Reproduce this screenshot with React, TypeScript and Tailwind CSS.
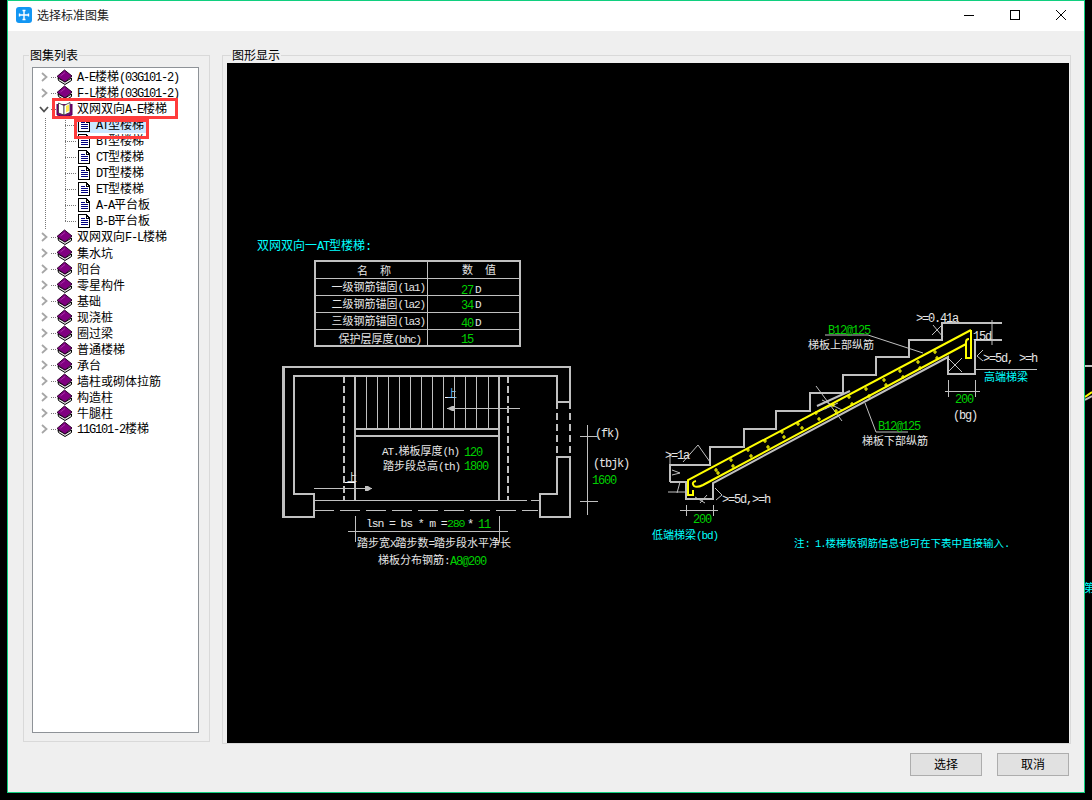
type Node = { label: string; open?: boolean; children?: string[] };

const tree: Node[] = [
  { label: 'A-E楼梯(03G101-2)' },
  { label: 'F-L楼梯(03G101-2)' },
  {
    label: '双网双向A-E楼梯',
    open: true,
    children: ['AT型楼梯', 'BT型楼梯', 'CT型楼梯', 'DT型楼梯', 'ET型楼梯', 'A-A平台板', 'B-B平台板'],
  },
  { label: '双网双向F-L楼梯' },
  { label: '集水坑' },
  { label: '阳台' },
  { label: '零星构件' },
  { label: '基础' },
  { label: '现浇桩' },
  { label: '圈过梁' },
  { label: '普通楼梯' },
  { label: '承台' },
  { label: '墙柱或砌体拉筋' },
  { label: '构造柱' },
  { label: '牛腿柱' },
  { label: '11G101-2楼梯' },
];

const MONO = '"Liberation Mono", monospace';
const CJK = '"Noto Sans CJK SC", sans-serif';

// latin runs are 6px wide in the original bitmap font, so split them off from the CJK runs
function splitRuns(text: string) {
  return text.match(/[\x00-\x7f]+|[^\x00-\x7f]+/g) ?? [];
}

function Mixed({ text }: { text: string }) {
  return (
    <>
      {splitRuns(text).map((run, i) =>
        /^[\x00-\x7f]/.test(run) ? (
          <span key={i} className="font-['Liberation_Mono',monospace] text-xs tracking-[-1.2px]">
            {run}
          </span>
        ) : (
          <span key={i}>{run}</span>
        ),
      )}
    </>
  );
}

function Chevron({ open }: { open?: boolean }) {
  return open ? (
    <svg width="10" height="7" viewBox="0 0 10 7" fill="none" stroke="#505050" strokeWidth="1.8">
      <path d="M1 1 L5 5.5 L9 1" />
    </svg>
  ) : (
    <svg width="7" height="10" viewBox="0 0 7 10" fill="none" stroke="#a6a6a6" strokeWidth="1.8">
      <path d="M1 1 L5.5 5 L1 9" />
    </svg>
  );
}

function BookIcon() {
  return (
    <svg width="17" height="16" viewBox="0 0 17 16" className="shrink-0">
      <path d="M2 9 L2.5 11.5 L9 15.5 L15.5 11.5 L15.5 9 L9 13 Z" fill="#e8e8e8" stroke="#000" strokeWidth="1" />
      <path d="M1 7.5 L8.5 1 L16 7 L9 13 Z" fill="#800080" stroke="#2a002a" strokeWidth="1" />
      <path d="M4.5 7 L9 3.5" stroke="#a830a8" strokeWidth="1" />
    </svg>
  );
}

function OpenBookIcon() {
  return (
    <svg width="17" height="16" viewBox="0 0 17 16" className="shrink-0">
      <path d="M1 3 V14 L8 15.5 L16 14 V3" fill="#800080" stroke="#500050" strokeWidth="1" />
      <path d="M2.5 2 L8 4.5 V14 L2.5 12 Z" fill="#fff" stroke="#333" strokeWidth="0.8" />
      <path d="M14 1.5 L8 4.5 V14 L14 11.5 Z" fill="#fff" stroke="#333" strokeWidth="0.8" />
      <path d="M10 5 L13 3.5 V10 L10 11.5 Z" fill="#ffe94a" />
    </svg>
  );
}

function DocIcon() {
  return (
    <svg width="12" height="14" viewBox="0 0 12 14" className="shrink-0" shapeRendering="crispEdges">
      <path d="M0.5 0.5 H8 L11.5 4 V13.5 H0.5 Z" fill="#fff" stroke="#000" strokeWidth="1" />
      <path d="M8 0.5 V4 H11.5" fill="none" stroke="#000" strokeWidth="1" />
      <path d="M2.5 4.5 H7 M2.5 6.5 H9.5 M2.5 8.5 H9.5 M2.5 10.5 H9.5" stroke="#000080" strokeWidth="1" />
    </svg>
  );
}

function TreeRows() {
  return (
    <>
      {tree.map((node) => (
        <div key={node.label}>
          <div className="flex h-4 items-center">
            <span className="ml-[5px] flex w-[12px] justify-center">
              <Chevron open={node.open} />
            </span>
            <span className="ml-[6px]">{node.open ? <OpenBookIcon /> : <BookIcon />}</span>
            <span className="ml-[4px] whitespace-nowrap leading-4">
              <Mixed text={node.label} />
            </span>
          </div>
          {node.children?.map((child, i) => (
            <div key={child} className="flex h-4 pl-[41px]">
              <div className={`flex items-center pl-[4px] pr-[2px] ${i === 0 ? 'bg-[#cce8ff]' : ''}`}>
                <DocIcon />
                <span className="ml-[6px] whitespace-nowrap leading-4">
                  <Mixed text={child} />
                </span>
              </div>
            </div>
          ))}
        </div>
      ))}
    </>
  );
}

// Text on the CAD canvas, x/y in page pixels, y is the vertical centre
function T({
  x,
  y,
  s = 11,
  fill = '#e6e6e6',
  anchor = 'start',
  children,
}: {
  x: number;
  y: number;
  s?: number;
  fill?: string;
  anchor?: 'start' | 'middle' | 'end';
  children: string;
}) {
  return (
    <text x={x} y={y + s * 0.38} fill={fill} textAnchor={anchor}>
      {splitRuns(children).map((run, i) =>
        /^[\x00-\x7f]/.test(run) ? (
          <tspan key={i} fontFamily={MONO} fontSize={s} letterSpacing={-s * 0.1} xmlSpace="preserve">
            {run}
          </tspan>
        ) : (
          <tspan key={i} fontFamily={CJK} fontSize={s}>
            {run}
          </tspan>
        ),
      )}
    </text>
  );
}

const rebarTies = [
  [716, 470], [718, 473], [731, 460], [733, 466], [748, 450], [751, 456], [765, 441], [768, 447],
  [782, 432], [784, 437], [798, 424], [802, 428], [816, 413], [819, 419], [833, 405], [836, 411],
  [849, 397], [852, 404], [866, 389], [869, 396], [884, 380], [886, 385], [900, 371], [903, 377],
  [918, 362], [920, 368], [935, 352], [937, 358],
];

const treads = [366, 377, 388, 399, 410, 421, 432, 443, 454, 465, 476, 488];

const GREY = '#c0c0c0';
const GREEN = '#00d000';
const CYAN = '#00ffff';

function Drawing() {
  return (
    <svg viewBox="227 63 842 680" className="block h-[680px] w-[842px] bg-black">
      <T x={257} y={245} s={12} fill={CYAN}>双网双向一AT型楼梯:</T>

      {/* table */}
      <g fill="none" stroke={GREY} shapeRendering="crispEdges">
        <rect x={315} y={261} width={205} height={85} strokeWidth={2} />
        <path d="M427.5 261 V346 M315 278.5 H520 M315 295.5 H520 M315 312.5 H520 M315 329.5 H520" strokeWidth={1} />
      </g>
      <T x={357} y={271}>名</T>
      <T x={380} y={271}>称</T>
      <T x={462} y={270}>数</T>
      <T x={485} y={270}>值</T>
      <T x={425} y={287} anchor="end">一级钢筋锚固(la1)</T>
      <T x={425} y={304} anchor="end">二级钢筋锚固(la2)</T>
      <T x={425} y={321} anchor="end">三级钢筋锚固(la3)</T>
      <T x={421} y={339} anchor="end">保护层厚度(bhc)</T>
      <T x={461} y={289} s={12} fill={GREEN}>27</T>
      <T x={461} y={304} s={12} fill={GREEN}>34</T>
      <T x={461} y={322} s={12} fill={GREEN}>40</T>
      <T x={461} y={338} s={12} fill={GREEN}>15</T>
      <T x={475} y={289}>D</T>
      <T x={475} y={304}>D</T>
      <T x={475} y={322}>D</T>

      {/* stair plan */}
      <g fill="none" stroke={GREY} shapeRendering="crispEdges">
        <path
          d="M283.5 517 V367 H570 V402 H557 V376 H294 V494 H314 V517 Z M570 457 V517 H540 V494 H557 V457 Z"
          strokeWidth={2.5}
        />
        <path d="M557 402 V457 M570 402 V457" strokeWidth={1.5} strokeDasharray="7 4" />
        <path d="M344 376 V500 M508 376 V500" strokeWidth={2} strokeDasharray="7 3" />
        <path d="M355 376 V500 M499 376 V500 M355 429 H499 M355 436 H499" strokeWidth={2} />
        {treads.map((x) => (
          <path key={x} d={`M${x}.5 376 V429`} strokeWidth={1} />
        ))}
        <path d="M314 500.5 H527 M531 500.5 H539" strokeWidth={1} />
        <path d="M314 510.5 H538" strokeWidth={1} strokeDasharray="20 6" />
        <path d="M520 408.5 H447 M314 488.5 H372" strokeWidth={1} />
        <path d="M445 397.5 H454 M345 482.5 H355" stroke="#fff" strokeWidth={1} />
        <path d="M355.5 516 V542 M499.5 516 V542 M348 531.5 H508" strokeWidth={1} />
        <path d="M587.5 425 V515 M580 436.5 H597 M580 501.5 H598" strokeWidth={1} />
      </g>
      <path d="M447 408.5 L452 406 H455 V411 H452 Z M372 488.5 L368 486 H365 V491 H368 Z" fill={GREY} />
      <T x={447} y={393} s={10} fill="#7fc8ff">上</T>
      <T x={347} y={477} s={10} fill="#e6e6e6">上</T>
      <T x={382} y={451}>AT.梯板厚度(h)</T>
      <T x={464} y={451} s={12} fill={GREEN}>120</T>
      <T x={383} y={466}>踏步段总高(th)</T>
      <T x={464} y={465} s={12} fill={GREEN}>1800</T>
      <T x={366} y={523} s={11.5}>lsn = bs * m =</T>
      <T x={447} y={523} s={11.5} fill={GREEN}>280</T>
      <T x={467} y={523} s={12}>*</T>
      <T x={478} y={523} s={12} fill={GREEN}>11</T>
      <T x={357} y={543}>踏步宽X踏步数=踏步段水平净长</T>
      <T x={378} y={560}>梯板分布钢筋:</T>
      <T x={450} y={560} s={12} fill={GREEN}>A8@200</T>
      <T x={595} y={432} s={12}>(fk)</T>
      <T x={593} y={462} s={12}>(tbjk)</T>
      <T x={592} y={479} s={12} fill={GREEN}>1600</T>

      {/* stair section */}
      <g fill="none" stroke={GREY}>
        <path
          d="M670 482 V465 H710 V447 H744 V429 H776 V411 H810 V393 H843 V375 H876 V357 H909 V340 H942 V323 H1002 M975 340 H1002 M975 340 V374 H948 V357 L713 483 V499 H686 V482 H670"
          strokeWidth={2}
        />
        <path d="M817 406 L850 391" strokeWidth={2} />
        <g strokeWidth={1}>
          <path d="M816 386 L842 421 M818 412 L838 403 M825 409 L842 398 M822 400 L842 410" />
          <path d="M868 335 L923 353 M825 335 H868 M865 403 L876 432 H908" />
          <path d="M932 335 L942 325 M933 325 L943 337 M992 320 V345 M982 340 H1001" />
          <path d="M948 358 L962 372 M962 358 L948 372" />
          <path d="M983 350 L977 356 L983 361 M975 369.5 H1037" />
          <path d="M948.5 380 V397 M975.5 380 V397 M945 391.5 H980" />
          <path d="M683 462 L698 445 L710 462 M670 454 V482 M672 470 L680 473 L672 475 M668 492 H687 M680 482 L677 493" />
          <path d="M695 497 L705 503 M700 503 L707 495 M715 488 L722 495 L716 500" />
          <path d="M686.5 505 V516 M713.5 505 V516 M680 510.5 H718" />
        </g>
      </g>
      <g fill="none" stroke="#ffff00" strokeWidth={2}>
        <path d="M971 330 L688 480 V495 H693 V490" />
        <path d="M971 330 V358 H966 V342 Q966 339 969 339 M966 344 L703 485 Q697 488 694 486 Q691 482 696 481" />
        {rebarTies.map(([x, y]) => (
          <path key={`${x}-${y}`} d={`M${x - 2} ${y} H${x + 2} M${x} ${y - 2} V${y + 2}`} strokeWidth={1.2} />
        ))}
      </g>
      <T x={828} y={329} fill={GREEN} s={12}>B12@125</T>
      <T x={808} y={345}>梯板上部纵筋</T>
      <T x={878} y={425} fill={GREEN} s={12}>B12@125</T>
      <T x={862} y={441}>梯板下部纵筋</T>
      <T x={916} y={317} s={12}>&gt;=0.41a</T>
      <T x={973} y={335} s={12}>15d</T>
      <T x={983} y={357} s={12}>&gt;=5d, &gt;=h</T>
      <T x={984} y={377} fill={CYAN}>高端梯梁</T>
      <T x={955} y={398} s={12} fill={GREEN}>200</T>
      <T x={953} y={414} s={12}>(bg)</T>
      <T x={665} y={454} s={12}>&gt;=1a</T>
      <T x={722} y={498} s={12}>&gt;=5d,&gt;=h</T>
      <T x={693} y={518} s={12} fill={GREEN}>200</T>
      <T x={652} y={535} fill={CYAN}>低端梯梁(bd)</T>
      <T x={794} y={543} s={10.5} fill={CYAN}>注: 1.楼梯板钢筋信息也可在下表中直接输入.</T>
    </svg>
  );
}

export default function App() {
  return (
    <div className="relative h-[800px] w-[1092px] overflow-hidden bg-black font-['Noto_Sans_CJK_SC',sans-serif] text-xs text-black">
      <div className="ml-[7px] flex h-[793px] w-[1078px] flex-col border border-[#10cf7f]">
        {/* title bar */}
        <div className="flex h-[30px] shrink-0 items-center bg-white pb-[2px]">
          <svg width="16" height="16" viewBox="0 0 16 16" className="ml-[8px]">
            <rect width="16" height="16" rx="3" fill="#1296f3" />
            <path d="M8 3 V13 M3.5 8 H12.5 M3.5 6.5 V9.5 M12.5 6.5 V9.5 M6.5 3.5 H9.5 M6.5 12.5 H9.5" stroke="#fff" strokeWidth="1.4" fill="none" />
          </svg>
          <span className="ml-[5px] text-[#222]">选择标准图集</span>
          <div className="ml-auto flex h-full">
            <div className="flex w-[46px] items-center justify-center">
              <svg width="10" height="10" viewBox="0 0 10 10">
                <path d="M0 5.5 H10" stroke="#000" />
              </svg>
            </div>
            <div className="flex w-[46px] items-center justify-center">
              <svg width="10" height="10" viewBox="0 0 10 10">
                <rect x="0.5" y="0.5" width="9" height="9" fill="none" stroke="#000" />
              </svg>
            </div>
            <div className="flex w-[46px] items-center justify-center">
              <svg width="10" height="10" viewBox="0 0 10 10">
                <path d="M0 0 L10 10 M10 0 L0 10" stroke="#000" />
              </svg>
            </div>
          </div>
        </div>

        <div className="flex-1 bg-[#efefef] pt-[24px]">
          <div className="flex items-start gap-[12px] pl-[15px]">
            {/* tree group */}
            <div className="relative h-[687px] w-[187px] border border-[#d9d9d9] pl-[8px] pt-[11px]">
              <span className="absolute left-[5px] top-[-9px] bg-[#efefef] px-px leading-4">图集列表</span>
              <div className="relative h-[666px] w-[167px] border border-[#8e9297] bg-white pt-px">
                <TreeRows />
                <svg className="absolute left-0 top-0 h-full w-full" fill="none" stroke="#777" strokeDasharray="1 1" shapeRendering="crispEdges">
                  <path d="M12.5 50 V161 M32.5 48 V153" />
                  <path d="M32 57.5 H43 M32 73.5 H43 M32 89.5 H43 M32 105.5 H43 M32 121.5 H43 M32 137.5 H43 M32 153.5 H43" />
                  {[9, 25, 41, 169, 185, 201, 217, 233, 249, 265, 281, 297, 313, 329, 345, 361].map((y) => (
                    <path key={y} d={`M18 ${y}.5 H23`} />
                  ))}
                </svg>
                <div className="absolute left-[19px] top-[30px] h-[21px] w-[126px] border-[3px] border-[#ff3c3c]" />
                <div className="absolute left-[41px] top-[51px] h-[20px] w-[75px] border-[3px] border-[#ff3c3c]" />
              </div>
            </div>

            {/* drawing group */}
            <div className="relative h-[689px] w-[849px] border border-[#d9d9d9] pl-[4px] pt-[7px]">
              <span className="absolute left-[8px] top-[-9px] bg-[#efefef] px-px leading-4">图形显示</span>
              <Drawing />
            </div>
          </div>

          <div className="mt-[9px] flex justify-end gap-[15px] pr-[15px]">
            <button className="h-[23px] w-[72px] border border-[#adadad] bg-[#e1e1e1] pb-[2px] text-xs">选择</button>
            <button className="h-[23px] w-[72px] border border-[#adadad] bg-[#e1e1e1] pb-[2px] text-xs">取消</button>
          </div>
        </div>
      </div>

      {/* bits of the CAD window showing behind the dialog */}
      <svg className="absolute left-[1085px] top-0 h-[800px] w-[7px]" fill="none">
        <path d="M0 366 H7" stroke={GREY} strokeWidth="2" />
        <path d="M0 397 L7 392" stroke="#ffff00" strokeWidth="2" />
        <path d="M0 400 L7 396" stroke={GREY} strokeWidth="2" />
        <text x="-1" y="592" fill={CYAN} fontSize="11" fontFamily={CJK}>
          第
        </text>
      </svg>
    </div>
  );
}
